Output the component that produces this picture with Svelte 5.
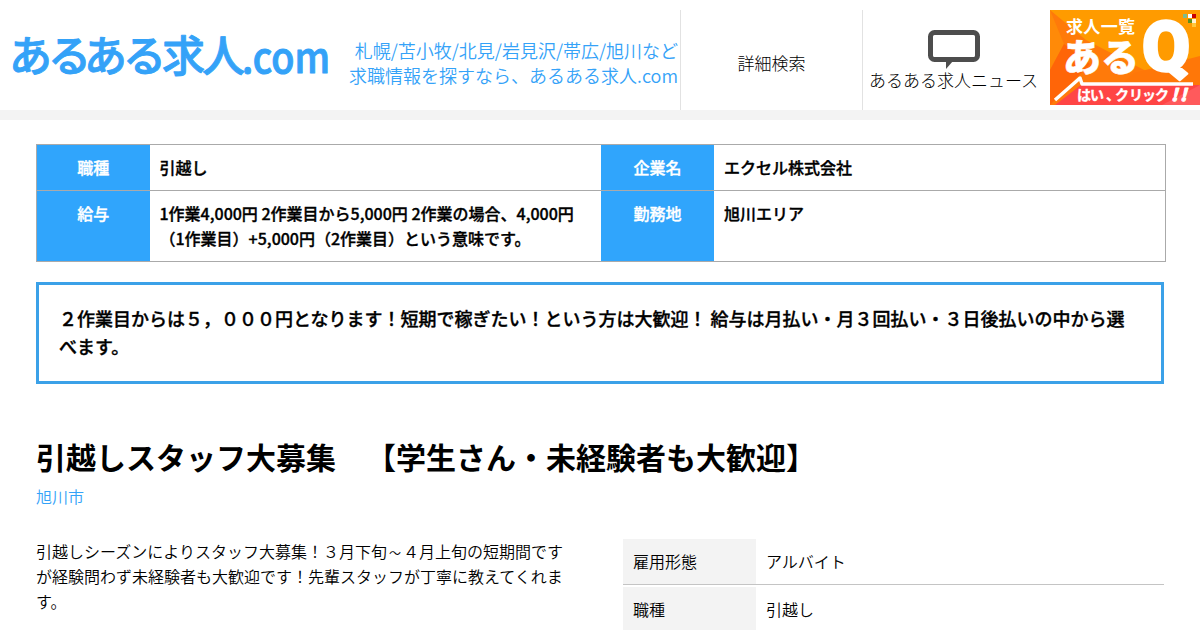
<script lang="ts">
  const summary = [
    [
      { label: "職種", value: "引越し" },
      { label: "企業名", value: "エクセル株式会社" },
    ],
    [
      { label: "給与", value: "1作業4,000円 2作業目から5,000円 2作業の場合、4,000円（1作業目）+5,000円（2作業目）という意味です。" },
      { label: "勤務地", value: "旭川エリア" },
    ],
  ];

  const details = [
    { label: "雇用形態", value: "アルバイト" },
    { label: "職種", value: "引越し" },
  ];
</script>

<header class="header">
  <a class="logo" href="#top" aria-label="あるある求人.com">
    <svg width="340" height="100" viewBox="0 0 340 100">
      <text class="logo-kana" x="9 48 84 123 162 202" y="71.5">あるある求人</text>
      <text class="logo-com" x="242" y="73" textLength="88" lengthAdjust="spacingAndGlyphs">.com</text>
    </svg>
  </a>
  <p class="tagline">札幌/苫小牧/北見/岩見沢/帯広/旭川など<br />求職情報を探すなら、あるある求人.com</p>
  <nav class="nav">
    <a class="nav-item search" href="#search">詳細検索</a>
    <a class="nav-item news" href="#news">
      <svg width="52" height="40" viewBox="0 0 52 40">
        <rect x="2.5" y="2.5" width="47" height="27" rx="4" fill="none" stroke="#4d4d4d" stroke-width="5" />
        <path d="M18 31h7l-7 8z" fill="#4d4d4d" />
      </svg>
      <span>あるある求人ニュース</span>
    </a>
  </nav>
  <a class="banner" href="#aruq" aria-label="求人一覧 あるQ">
    <svg width="150" height="95" viewBox="0 0 150 95">
      <rect width="150" height="95" fill="#ff7a0a" />
      <path d="M0 0h150v48L98 62 36 30z" fill="#ff9b00" />
      <path d="M0 0l14 34L0 60z" fill="#ff8a08" />
      <path d="M14 34L40 54 0 95V60z" fill="#ff6508" />
      <path d="M84 63l66-17v30H70z" fill="#ff7708" />
      <path d="M5 95l26-20h119v20z" fill="#ff4545" />
      <path d="M112 95l38-20v20z" fill="#ff5a5c" />
      <path d="M5 90L30 68l2 6h111" fill="none" stroke="#fff" stroke-width="3.5" stroke-linejoin="round" />
      <text class="b-list" x="16" y="23" textLength="69">求人一覧</text>
      <text class="b-aru" x="13 51" y="61">ある</text>
      <text class="b-q" x="92" y="61" textLength="48" lengthAdjust="spacingAndGlyphs">Q</text>
      <text class="b-click" x="27 40 56 65 79 92 105" y="90">はい、クリック</text>
      <text class="b-bang" x="121 130" y="91">!!</text>
      <g>
        <rect x="133" y="4" width="4" height="4" fill="#7dbb8d" />
        <rect x="138" y="4" width="4" height="4" fill="#fff" />
        <rect x="142" y="4" width="4" height="4" fill="#c80000" />
        <rect x="138" y="9" width="4" height="4" fill="#5c8f1c" />
        <rect x="142" y="9" width="4" height="4" fill="#fff3d5" />
        <rect x="142" y="13" width="4" height="4" fill="#ffc83c" />
      </g>
    </svg>
  </a>
</header>

<main>
  <table class="summary">
    <tbody>
      {#each summary as row}
        <tr>
          {#each row as cell}
            <th>{cell.label}</th>
            <td>{cell.value}</td>
          {/each}
        </tr>
      {/each}
    </tbody>
  </table>

  <div class="catch">２作業目からは５，０００円となります！短期で稼ぎたい！という方は大歓迎！ 給与は月払い・月３回払い・３日後払いの中から選べます。</div>

  <h1>引越しスタッフ大募集　【学生さん・未経験者も大歓迎】</h1>
  <a class="city" href="#city">旭川市</a>

  <div class="columns">
    <p class="body">引越しシーズンによりスタッフ大募集！３月下旬<span class="wave">～</span>４月上旬の短期間ですが経験問わず未経験者も大歓迎です！先輩スタッフが丁寧に教えてくれます。</p>
    <dl class="details">
      {#each details as d}
        <div class="detail">
          <dt>{d.label}</dt>
          <dd>{d.value}</dd>
        </div>
      {/each}
    </dl>
  </div>
</main>

<style>
  :global(body) {
    height: 630px;
    overflow: hidden;
    background: #fff;
    color: #000;
    font: 350 16px/25px "Noto Sans CJK JP", sans-serif;
    text-spacing-trim: space-all;
  }
  a { color: inherit; text-decoration: none; }
  svg { display: block; }

  .header {
    display: flex;
    box-sizing: border-box;
    height: 120px;
    border-bottom: 10px solid #f3f3f3;
  }
  .logo { width: 340px; }
  .logo-kana, .logo-com {
    fill: #34a2f8;
    stroke: #34a2f8;
    stroke-linejoin: round;
  }
  .logo-kana { font-size: 43px; font-weight: 500; stroke-width: 0.9; }
  .logo-com { font-size: 41px; font-weight: 500; stroke-width: 1; }
  .tagline {
    box-sizing: border-box;
    width: 340px;
    margin: 0;
    padding: 38px 2px 0 0;
    color: #34a2f8;
    font-size: 18px;
    text-align: right;
    white-space: nowrap;
  }
  .nav { display: flex; padding-top: 10px; font-size: 17px; font-weight: 300; }
  .nav-item {
    display: flex;
    box-sizing: border-box;
    flex-direction: column;
    align-items: center;
    border-left: 1px solid #e2e2e2;
    white-space: nowrap;
  }
  .search { width: 182px; padding-top: 40px; }
  .news { width: 188px; padding: 20px 6px 0 0; }
  .news span { margin-top: -3px; }
  .news svg { margin-right: -1px; }
  .banner { padding-top: 10px; }
  .banner text { fill: #fff; stroke: #fff; stroke-linejoin: round; }
  .banner .b-list { font-size: 17px; font-weight: 700; stroke-width: 0; }
  .banner .b-aru { font-size: 38px; font-weight: 900; stroke-width: 0.5; }
  .banner .b-q { font-family: Roboto, sans-serif; font-size: 71px; font-weight: 900; stroke-width: 2.5; }
  .banner .b-click { font-size: 14px; font-weight: 700; stroke-width: 0.3; }
  .banner .b-bang { font-size: 17px; font-style: italic; font-weight: 900; stroke-width: 1; }

  main { padding: 24px 36px 0; }
  .summary {
    width: 1130px;
    border: 1px solid #aaa;
    border-collapse: collapse;
    table-layout: fixed;
    font-weight: 500;
    -webkit-text-stroke: 0.35px;
  }
  .summary tr + tr { border-top: 1px solid #aaa; }
  .summary th, .summary td { padding: 10px; vertical-align: top; }
  .summary th {
    box-sizing: border-box;
    width: 113px;
    background: #30a5fc;
    color: #fff;
    font-weight: 500;
    text-align: center;
  }
  .catch {
    margin-top: 20px;
    padding: 19px 20px 21px;
    border: 3px solid #3ba1e8;
    font-size: 18px;
    font-weight: 500;
    line-height: 28px;
    -webkit-text-stroke: 0.35px;
  }
  h1 { margin: 50px 0 0; font-size: 30px; font-weight: 700; line-height: 45px; }
  .city { display: block; margin-top: 5px; color: #34a2f8; }
  .columns { display: flex; justify-content: space-between; margin-top: 30px; }
  .body { width: 541px; margin: 0; }
  .wave { display: inline-block; width: 16px; font-size: 12px; line-height: 1; text-align: center; }
  .details { width: 541px; margin: 0; }
  .detail {
    display: flex;
    margin-bottom: 2px;
    border-bottom: 1px solid #c4c4c4;
  }
  dt { box-sizing: border-box; width: 133px; padding: 10px; background: #f3f3f3; }
  dd { margin: 0; padding: 10px; }
</style>
